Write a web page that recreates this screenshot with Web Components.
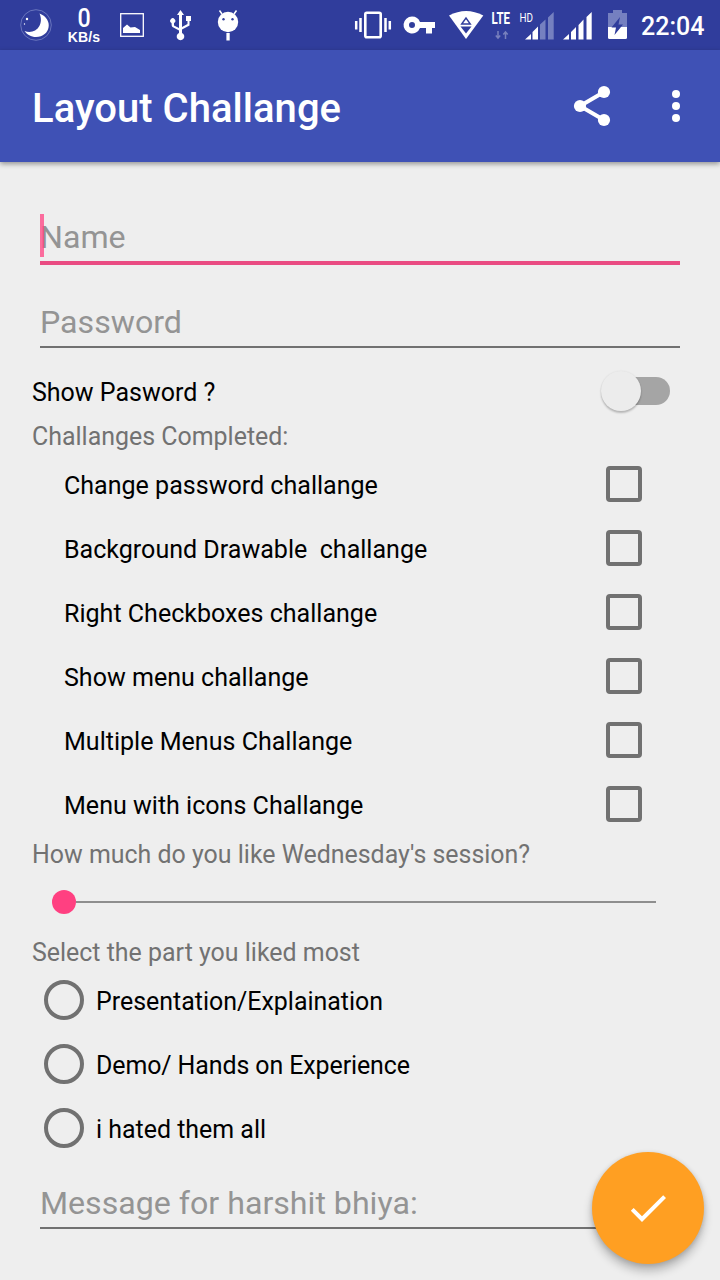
<!DOCTYPE html>
<html lang="en"><head><meta charset="utf-8"><title>Layout Challange</title>
<style>
body{margin:0;background:#eee;font-family:Roboto,"Liberation Sans",sans-serif}
</style></head><body>
<challenge-app></challenge-app>
<script>
const define=(name,html)=>{
  const t=document.createElement('template');t.innerHTML=html;
  customElements.define(name,class extends HTMLElement{
    constructor(){super();this.attachShadow({mode:'open'}).append(t.content.cloneNode(true));}
  });
};
define('status-bar',`<style>
:host{display:flex;height:50px;background:#303d9c;color:#fff;overflow:hidden;justify-content:space-between}
div{display:flex;height:50px}svg{display:block;height:50px;fill:#fff;flex:none;overflow:visible}
.speed{width:40px;flex-direction:column;align-items:center;height:auto;padding-top:7px}
.speed b{font:500 25px/23px Roboto,sans-serif;transform:scaleX(.93)}.speed span{font:700 14px/14px "Liberation Sans",sans-serif;letter-spacing:.2px}
time{font:500 25px/54px Roboto,sans-serif;width:64px;margin-right:15px;white-space:nowrap}
</style>
<div>
<svg width="64" viewBox="0 0 64 50"><circle cx="36" cy="25" r="15.3" fill="none" stroke="#6975bd" stroke-width="1"/><path d="M39.500 13.500C54 19 50.500 37 36 37C31 37 27 34.500 24.500 31C35.500 35 44.500 25 39.500 13.500Z"/><circle cx="27" cy="19" r="1.200"/><circle cx="24.500" cy="24" r=".7"/></svg>
<div class="speed"><b>0</b><span>KB/s</span></div>
<svg width="46" viewBox="104 0 46 50"><rect x="120.700" y="13.700" width="22.600" height="22.600" fill="none" stroke="#fff" stroke-width="1.300"/><path d="M123 33V28L127 24.500L130.500 27.500L135 27L140 30V33Z"/></svg>
<svg width="50" viewBox="150 0 50 50"><path d="M180.500 10L184 15H182V27L187.500 24V21H186V16H191V21H189.500V25.500L182 29.500V33A3.800 3.800 0 1 1 179 33V30.500L172.500 27Q171.500 26.500 171.500 23A2.500 2.500 0 1 1 174 23V25.500L179 28V15H177Z"/></svg>
<svg width="46" viewBox="200 0 46 50"><circle cx="228" cy="22" r="10.200"/><path d="M222 14L219.500 10.500M234 14L236.500 10.500" stroke="#fff" stroke-width="1.500"/><circle cx="223.500" cy="19.300" r="1.200" fill="#303d9c"/><circle cx="232.500" cy="19.300" r="1.200" fill="#303d9c"/><rect x="226.400" y="33" width="3.300" height="7.500"/></svg>
</div><div>
<svg width="46" viewBox="350 0 46 50"><rect x="365.300" y="12.700" width="15.400" height="24.600" rx="1.500" fill="none" stroke="#fff" stroke-width="2.600"/><path d="M360.500 18V32M356.200 21V29.500M385.500 18V32M389.800 21V29.500" stroke="#fff" stroke-width="2.500"/></svg>
<svg width="46" viewBox="396 0 46 50"><path fill-rule="evenodd" d="M412 16.500A8.500 8.500 0 1 0 420 28H426V33.500H432V28H435V22H420A8.500 8.500 0 0 0 412 16.500ZM412 22A3 3 0 1 1 412 28A3 3 0 1 1 412 22Z"/></svg>
<svg width="46" viewBox="442 0 46 50"><path d="M449 15.500Q466 6.500 483.300 15.500L466 39Z"/><path d="M461.700 24L466 18L470.300 24Z" fill="none" stroke="#303d9c" stroke-width="1.400"/><path d="M460.500 26.500H471.500L466 33.500Z" fill="#303d9c"/></svg>
<svg width="26" viewBox="488 0 26 50"><text x="491.500" y="23.500" font-family="Roboto,sans-serif" font-size="17" font-weight="700" textLength="18.500" lengthAdjust="spacingAndGlyphs">LTE</text><path d="M498 31V38M495.800 35.500L498 38L500.200 35.500M505.500 39V32M503.300 34.500L505.500 32L507.700 34.500" fill="none" stroke="#7880bd" stroke-width="1.500"/></svg>
<svg width="46" viewBox="514 0 46 50"><text x="519.500" y="21.500" font-family="Roboto,sans-serif" font-size="13" textLength="13.500" lengthAdjust="spacingAndGlyphs">HD</text><path d="M525 39.500L531 34V39.500ZM532.500 32L538 26.500V39.500H532.500Z"/><path fill="#7580c0" d="M540 24.500L545.500 19.500V39.500H540ZM548 17.500L553.700 12V39.500H548Z"/></svg>
<svg width="40" viewBox="560 0 40 50"><path d="M563 39.500L569 34V39.500ZM571 32L576 27V39.500H571ZM578.500 25L583.500 19.500V39.500H578.500ZM586.500 17L591.700 12V39.500H586.500Z"/></svg>
<svg width="41" viewBox="600 0 41 50"><path fill="#7580c0" d="M608 13H613V10H622V13H627V27H608Z"/><path d="M608 27H627V37.500Q627 39 625.500 39H609.500Q608 39 608 37.500Z"/><path fill="#303d9c" d="M620 17L611.500 27.500H616L614.500 35L623 24.500H618.500Z"/></svg>
<time>22:04</time></div>`);
define('app-bar',`<style>
:host{display:flex;height:112px;box-sizing:border-box;background:#3f51b5;color:#fff;align-items:center;padding:0 20px 0 32px;box-shadow:0 2px 5px rgba(0,0,0,.38);position:relative}
h1{font-size:40px;line-height:48px;font-weight:500;margin:6px auto 0 0;white-space:nowrap;letter-spacing:.03px}
svg{width:48px;height:48px;fill:#fff;margin-left:36px}
</style><h1><slot></slot></h1>
<svg viewBox="0 0 24 24"><path d="M18 5L6 12L18 19" fill="none" stroke="#fff" stroke-width="2"/><circle cx="18" cy="5" r="3.050"/><circle cx="6" cy="12" r="3.050"/><circle cx="18" cy="19" r="3.050"/></svg>
<svg viewBox="0 0 24 24"><circle cx="12" cy="6" r="2"/><circle cx="12" cy="12" r="2"/><circle cx="12" cy="18" r="2"/></svg>`);
define('text-field',`<style>
:host{display:flex;align-items:flex-end;box-sizing:border-box;margin:0 40px;height:83px;border-bottom:2px solid #717171;color:#949494;font-size:32.15px;line-height:38px;padding-bottom:5px;position:relative}
:host([active]){height:103px;border-bottom:4px solid #e94b82}
i{display:none;position:absolute;left:0;bottom:4px;width:4px;height:43px;background:#ff4081;opacity:.75}
:host([active]) i{display:block}
</style><slot></slot><i></i>`);
define('section-label',`<style>:host{display:block;padding-left:32px;height:36px;line-height:38px;font-size:24.95px;color:#727272;white-space:pre}</style><slot></slot>`);
define('switch-row',`<style>
:host{display:flex;height:70px;box-sizing:border-box;padding:9px 50px 0 32px;justify-content:space-between;font-size:25px;color:#000}
span{line-height:71px}
div{width:56px;height:28px;border-radius:14px;background:#a5a5a5;margin-top:20px;position:relative}
b{position:absolute;left:-13px;top:-6px;width:40px;height:40px;border-radius:50%;background:#ececec;box-shadow:0 2px 2px rgba(0,0,0,.22),0 0 2px rgba(0,0,0,.08)}
</style><span><slot></slot></span><div><b></b></div>`);
define('check-row',`<style>
:host{display:flex;height:64px;box-sizing:border-box;padding:0 78px 0 64px;align-items:center;justify-content:space-between;font-size:25.05px;color:#000;white-space:pre}
span{margin-top:3px}i{box-sizing:border-box;width:36px;height:36px;border:4px solid #717171;border-radius:4px}
</style><span><slot></slot></span><i></i>`);
define('seek-bar',`<style>
:host{display:flex;height:60px;align-items:center;margin:0 64px 0 52px}
b{width:24px;height:24px;border-radius:50%;background:#ff4081}i{flex:1;height:2px;background:#8e8e8e}
</style><b></b><i></i>`);
define('radio-row',`<style>
:host{display:flex;height:64px;padding-left:44px;gap:12px;align-items:center;font-size:24.95px;color:#000}
span{margin-top:3px}i{box-sizing:border-box;width:40px;height:40px;border:4px solid #717171;border-radius:50%}
</style><i></i><span><slot></slot></span>`);
define('action-button',`<style>
:host{display:flex;align-items:center;justify-content:center;position:absolute;right:16px;bottom:16px;width:112px;height:112px;border-radius:50%;background:#ff9f22;box-shadow:0 7px 10px rgba(0,0,0,.24),0 1px 5px rgba(0,0,0,.14)}
svg{width:48px;height:48px;fill:#fff}
</style><svg viewBox="0 0 24 24"><path d="M9 16.170L4.830 12l-1.420 1.410L9 19 21 7l-1.410-1.410z"/></svg>`);
define('challenge-app',`<style>
:host{display:block;position:relative;width:720px;height:1280px;overflow:hidden;background:#eee}
main{display:flex;flex-direction:column}
.message{height:69px}.completed{margin-bottom:-2px}.part{line-height:42px}.demo{letter-spacing:-.09px}
</style>
<status-bar></status-bar><app-bar>Layout Challange</app-bar>
<main><text-field active>Name</text-field><text-field>Password</text-field>
<switch-row>Show Pasword ?</switch-row>
<section-label class="completed">Challanges Completed:</section-label>
<check-row>Change password challange</check-row><check-row>Background Drawable  challange</check-row><check-row>Right Checkboxes challange</check-row><check-row>Show menu challange</check-row><check-row>Multiple Menus Challange</check-row><check-row>Menu with icons Challange</check-row>
<section-label>How much do you like Wednesday's session?</section-label>
<seek-bar></seek-bar>
<section-label class="part">Select the part you liked most</section-label>
<radio-row>Presentation/Explaination</radio-row><radio-row class="demo">Demo/ Hands on Experience</radio-row><radio-row>i hated them all</radio-row>
<text-field class="message">Message for harshit bhiya:</text-field></main>
<action-button></action-button>`);
</script></body></html>
